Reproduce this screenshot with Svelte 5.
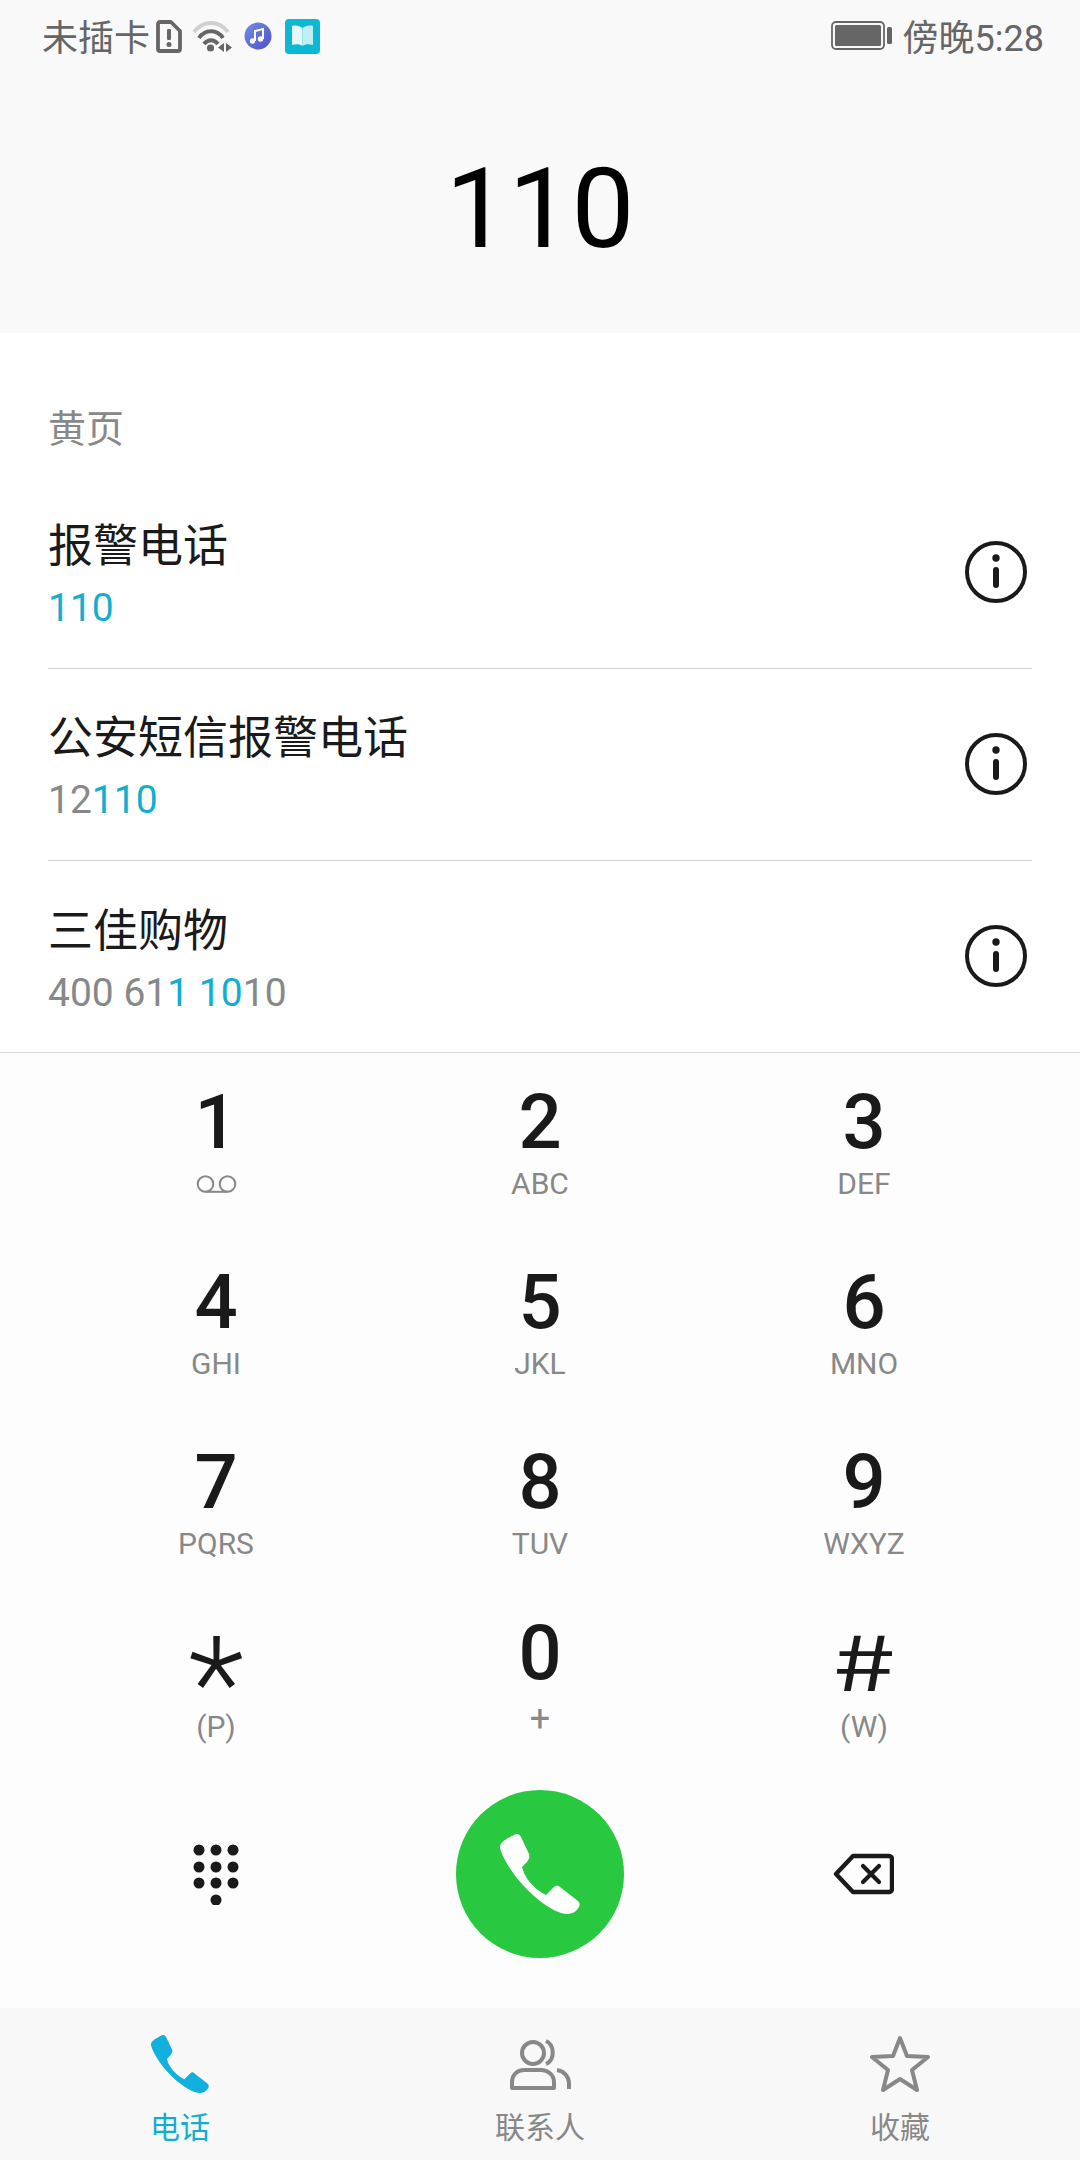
<script>
  const phone =
    'M14 1C17-1 19 0 21 3L29 20C30 23 29 25 27 28L22 33C24 42 32 54 46 61L54 53C56 51 58 51 60 53L78 67C80 69 80 71 79 73C76 78 72 80 67 80C57 80 38 68 22 50C8 34 0 18 0 13C0 8 8 4 14 1Z';

  const results = [
    { name: '报警电话', pre: '', hit: '110', post: '' },
    { name: '公安短信报警电话', pre: '12', hit: '110', post: '' },
    { name: '三佳购物', pre: '400 61', hit: '1 10', post: '10' }
  ];

  const keys = [
    { d: '1', voicemail: true },
    { d: '2', s: 'ABC' },
    { d: '3', s: 'DEF' },
    { d: '4', s: 'GHI' },
    { d: '5', s: 'JKL' },
    { d: '6', s: 'MNO' },
    { d: '7', s: 'PQRS' },
    { d: '8', s: 'TUV' },
    { d: '9', s: 'WXYZ' },
    { d: '*', s: '(P)', kind: 'star' },
    { d: '0', s: '+', kind: 'zero' },
    { d: '#', s: '(W)', kind: 'hash' }
  ];

  const padDots = [
    [6, 7], [23, 7], [40, 7],
    [6, 24], [23, 24], [40, 24],
    [6, 40], [23, 40], [40, 40],
    [23, 57]
  ];
</script>

<div class="screen">
  <header class="top">
    <div class="status">
      <div class="status-left">
        <span class="carrier">未插卡</span>
        <svg class="sim" width="26" height="33" viewBox="0 0 26 33">
          <path d="M4 2h11l9 9v18a2 2 0 0 1-2 2H4a2 2 0 0 1-2-2V4a2 2 0 0 1 2-2z" fill="none" stroke="#666" stroke-width="3.8" stroke-linejoin="round" />
          <rect x="11" y="9" width="4" height="11" rx="1.2" fill="#666" />
          <circle cx="13" cy="24.500" r="2.500" fill="#666" />
        </svg>
        <svg class="wifi" width="40" height="33" viewBox="0 0 40 33">
          <path d="M2 12C11 0 27 0 36 12" fill="none" stroke="#d0d0d0" stroke-width="3.800" />
          <path d="M7 18C13 9 25 9 31 18" fill="none" stroke="#666" stroke-width="4" />
          <path d="M12 24C16 19 22 19 26 24" fill="none" stroke="#666" stroke-width="4" />
          <circle cx="18.500" cy="28" r="3.600" fill="#666" />
          <path d="M32 23v9l-6-4.500zM34 23v9l6-4.500z" fill="#666" />
        </svg>
        <svg class="music" width="28" height="28" viewBox="0 0 28 28">
          <defs>
            <linearGradient id="note" x1="0" y1="0" x2="1" y2="1">
              <stop offset="0" stop-color="#6f8fe8" />
              <stop offset="1" stop-color="#4f4fc8" />
            </linearGradient>
          </defs>
          <circle cx="14" cy="14" r="13.500" fill="url(#note)" />
          <path d="M11 19V9l8-2v10" fill="none" stroke="#fff" stroke-width="2" />
          <circle cx="8.500" cy="19" r="2.700" fill="#fff" />
          <circle cx="16.500" cy="17" r="2.700" fill="#fff" />
        </svg>
        <svg class="book" width="35" height="35" viewBox="0 0 35 35">
          <rect width="35" height="35" rx="4" fill="#0cb8d2" />
          <path d="M7 7c4-1 8 0 10.500 2v18C15 25 11 25 7 26z" fill="#e4f8fb" />
          <path d="M28 7c-4-1-8 0-10.500 2v18C20 25 24 25 28 26z" fill="#bfeff5" />
        </svg>
      </div>
      <div class="status-right">
        <svg class="battery" width="61" height="29" viewBox="0 0 61 29">
          <rect x="1" y="1" width="52" height="27" rx="4" fill="none" stroke="#666" stroke-width="1.800" />
          <rect x="4" y="4" width="46" height="21" rx="1.500" fill="#666" />
          <rect x="56" y="6" width="5" height="17" rx="1.500" fill="#666" />
        </svg>
        <span class="clock">傍晚5:28</span>
      </div>
    </div>
    <div class="dialed">110</div>
  </header>

  <section class="results">
    <div class="section-label">黄页</div>
    {#each results as r}
      <div class="row">
        <div class="row-text">
          <div class="row-name">{r.name}</div>
          <div class="row-number">{r.pre}<span class="hit">{r.hit}</span>{r.post}</div>
        </div>
        <svg class="info" width="62" height="62" viewBox="0 0 62 62">
          <circle cx="31" cy="31" r="29" fill="none" stroke="#1a1a1a" stroke-width="4" />
          <circle cx="31" cy="17" r="3.700" fill="#1a1a1a" />
          <rect x="28" y="26" width="6" height="21" rx="3" fill="#1a1a1a" />
        </svg>
      </div>
    {/each}
  </section>

  <section class="dialer">
    <div class="keys">
      {#each keys as k}
        <div class="key {k.kind ?? ''}">
          <div class="digit">{k.d}</div>
          {#if k.voicemail}
            <svg class="vm" width="41" height="18" viewBox="0 0 41 18">
              <circle cx="9.500" cy="9" r="7.800" fill="none" stroke="#888" stroke-width="2" />
              <circle cx="31.500" cy="9" r="7.800" fill="none" stroke="#888" stroke-width="2" />
              <path d="M9.500 16.800h22" stroke="#888" stroke-width="2" />
            </svg>
          {:else}
            <div class="sub">{k.s}</div>
          {/if}
        </div>
      {/each}
    </div>
    <div class="actions">
      <svg width="46" height="62" viewBox="0 0 46 62" class="pad">
        {#each padDots as [x, y]}
          <circle cx={x} cy={y} r="5.500" fill="#1a1a1a" />
        {/each}
      </svg>
      <div class="call">
        <svg width="80" height="80" viewBox="0 0 80 80"><path d={phone} fill="#fff" /></svg>
      </div>
      <svg width="61" height="42" viewBox="0 0 61 42" class="del">
        <path d="M20 3H56a3 3 0 0 1 3 3V36a3 3 0 0 1-3 3H20L3 21z" fill="none" stroke="#1a1a1a" stroke-width="4.400" stroke-linejoin="round" />
        <path d="M30 13L46 29M46 13L30 29" stroke="#1a1a1a" stroke-width="4.200" stroke-linecap="round" />
      </svg>
    </div>
  </section>

  <nav class="tabs">
    <div class="tab active">
      <svg width="58" height="58" viewBox="0 0 80 80"><path d={phone} fill="#12b0dc" /></svg>
      <span>电话</span>
    </div>
    <div class="tab">
      <svg width="62" height="58" viewBox="0 0 62 58">
        <circle cx="24" cy="18" r="11" fill="none" stroke="#888" stroke-width="4" />
        <path d="M37 6C46 10 46 25 37 29" fill="none" stroke="#888" stroke-width="4" />
        <path d="M3 53V47C3 40 8 35 15 35H32C39 35 45 40 45 47V53Z" fill="none" stroke="#888" stroke-width="4" stroke-linejoin="round" />
        <path d="M48 35C55 36 60 42 60 48V54" fill="none" stroke="#888" stroke-width="4" />
      </svg>
      <span>联系人</span>
    </div>
    <div class="tab">
      <svg width="60" height="58" viewBox="0 0 60 58">
        <path d="M30 3L37 21L58 22L42 35L47 55L30 44L13 55L18 35L2 22L23 21Z" fill="none" stroke="#888" stroke-width="4" stroke-linejoin="round" />
      </svg>
      <span>收藏</span>
    </div>
  </nav>
</div>

<style>
  :global(body) {
    margin: 0;
    background: #fff;
  }

  .screen {
    width: 1080px;
    height: 2160px;
    display: flex;
    flex-direction: column;
    overflow: hidden;
    font-family: Roboto, "Noto Sans CJK SC", sans-serif;
  }

  .top {
    height: 333px;
    background: #f9f9f9;
    flex: none;
  }

  .status {
    height: 70px;
    padding: 0 36px 0 42px;
    display: flex;
    justify-content: space-between;
    align-items: center;
    color: #666;
    font-size: 36px;
  }

  .status-left,
  .status-right {
    display: flex;
    align-items: center;
  }

  .sim {
    margin-left: 6px;
    margin-top: 2px;
  }

  .wifi {
    margin-left: 10px;
    margin-top: 2px;
  }

  .music {
    margin-left: 12px;
    margin-top: 2px;
  }

  .book {
    margin-left: 13px;
    margin-top: 2px;
  }

  .clock {
    margin-left: 11px;
  }

  .dialed {
    text-align: center;
    font-size: 112px;
    font-weight: 400;
    line-height: 116px;
    color: #000;
    margin-top: 81px;
  }

  .results {
    height: 720px;
    background: #fff;
    flex: none;
    padding: 0 48px;
    box-sizing: border-box;
    border-bottom: 1px solid #ddd;
  }

  .section-label {
    height: 144px;
    padding-top: 72px;
    box-sizing: border-box;
    font-size: 38px;
    line-height: 48px;
    color: #888;
  }

  .row {
    height: 192px;
    box-sizing: border-box;
    display: flex;
    justify-content: space-between;
    align-items: center;
    border-bottom: 1px solid #d4d4d4;
  }

  .row:last-child {
    border-bottom: none;
  }

  .row-text {
    margin-top: 8px;
  }

  .row-name {
    font-size: 45px;
    line-height: 60px;
    color: #1a1a1a;
  }

  .row-number {
    font-size: 39px;
    line-height: 56px;
    margin-top: 3px;
    color: #888;
  }

  .hit {
    color: #12aed0;
  }

  .info {
    margin-right: 5px;
    margin-top: -2px;
  }

  .dialer {
    flex: 1;
    background: #fdfdfd;
    min-height: 0;
  }

  .keys {
    display: grid;
    grid-template-columns: repeat(3, 324px);
    padding-left: 54px;
  }

  .key {
    height: 180px;
    padding-top: 31px;
    box-sizing: border-box;
    display: flex;
    flex-direction: column;
    align-items: center;
  }

  .digit {
    font-size: 76px;
    font-weight: 500;
    line-height: 76px;
    color: #1a1a1a;
  }

  .sub {
    font-size: 30px;
    line-height: 48px;
    color: #888;
  }

  .vm {
    margin-top: 15px;
  }

  .key.star,
  .key.hash {
    padding-top: 28px;
  }

  .key.star .sub,
  .key.hash .sub {
    margin-top: 6px;
  }

  .key.star .digit {
    font-size: 130px;
    font-weight: 300;
    transform: translateY(26px);
  }

  .key.hash .digit {
    font-family: "Noto Sans CJK SC", sans-serif;
    font-weight: 400;
    transform: translateY(-1px) scaleX(1.5);
  }

  .key.zero {
    padding-top: 22px;
  }

  .key.zero .sub {
    margin-top: 4px;
    font-size: 36px;
  }

  .actions {
    display: grid;
    grid-template-columns: repeat(3, 324px);
    padding: 17px 0 0 54px;
    justify-items: center;
    align-items: center;
  }

  .del {
    margin-left: -2px;
  }

  .call {
    width: 168px;
    height: 168px;
    border-radius: 50%;
    background: #28c840;
    display: flex;
    align-items: center;
    justify-content: center;
  }

  .tabs {
    height: 152px;
    flex: none;
    background: #f8f8f8;
    display: grid;
    grid-template-columns: repeat(3, 1fr);
  }

  .tab {
    padding-top: 27px;
    display: flex;
    flex-direction: column;
    align-items: center;
    color: #888;
    font-size: 30px;
    line-height: 40px;
  }

  .tab span {
    margin-top: 15px;
  }

  .tab.active {
    color: #12aed0;
  }
</style>
